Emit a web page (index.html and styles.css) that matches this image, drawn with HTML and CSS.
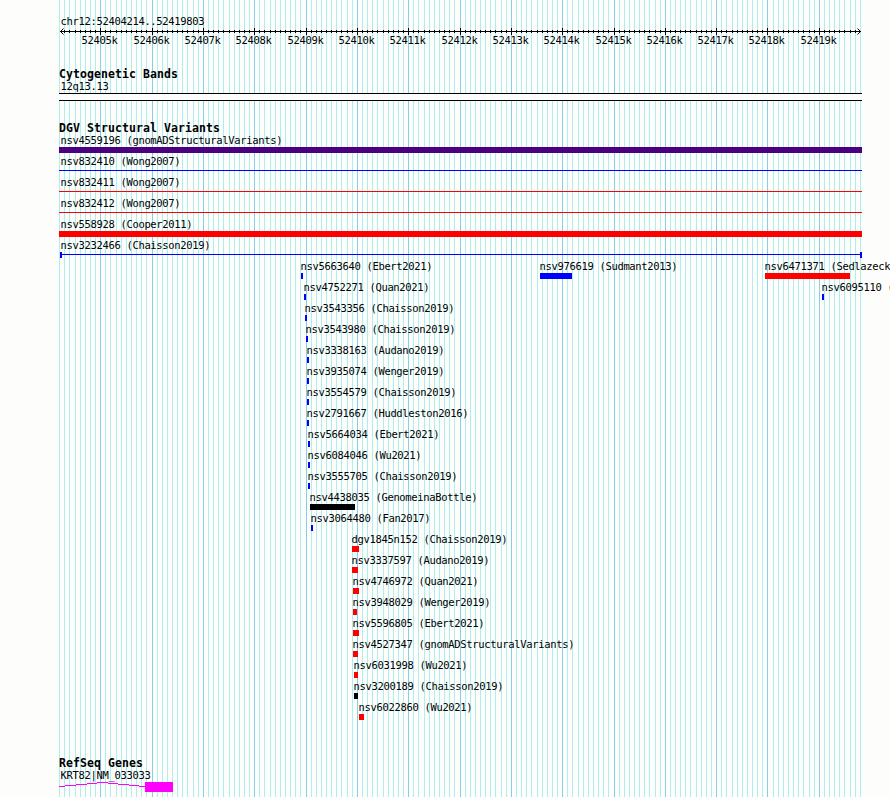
FILE: index.html
```
<!DOCTYPE html>
<html lang="en">
<head>
    <meta charset="UTF-8">
    <title>chr12:52404214..52419803</title>
    <link rel="stylesheet" href="styles.css">
</head>
<body>
    <div class="browser">
        <svg class="grid" id="grid" width="890" height="797" shape-rendering="crispEdges"></svg>

        <section class="ruler">
            <div class="label">chr12:52404214..52419803</div>
            <svg id="ruler" width="890" height="22"></svg>
        </section>

        <section class="track cytoband">
            <h2>Cytogenetic Bands</h2>
            <div class="label">12q13.13</div>
            <div class="band"></div>
        </section>

        <section class="track variants">
            <h2>DGV Structural Variants</h2>
            <div id="variants"></div>
        </section>

        <section class="track genes">
            <h2>RefSeq Genes</h2>
            <div class="label">KRT82|NM_033033</div>
            <svg width="890" height="12" shape-rendering="crispEdges">
                <path d="M59 5.5H65M65 4.5H76M76 3.5H87M87 2.5H97M97 1.5H108M108 2.5H118M118 3.5H129M129 4.5H139M139 5.5H145" stroke="#f0f"/>
                <rect x="145" y="1" width="28" height="10" fill="#f0f"/>
            </svg>
        </section>
    </div>
    <script src="tracks.js"></script>
</body>
</html>
```
FILE: styles.css
```
body {
    margin: 0;
    background: #fdfefc;
    color: #000;
    overflow: hidden;
}
.browser {
    position: relative;
    width: 890px;
    height: 797px;
    overflow: hidden;
    font-family: "DejaVu Sans Mono", monospace;
}
.browser svg {
    display: block;
}
/* guide lines run behind every track */
.browser .grid {
    position: absolute;
    top: 0;
    left: 0;
    z-index: -1;
}
h2 {
    margin: 0;
    padding-left: 59px;
    height: 12px;
    font-size: 11.5px;
    line-height: 12px;
    letter-spacing: 0.077px;
}
.label {
    padding-left: 60.5px;
    height: 12px;
    font-size: 10.5px;
    line-height: 12px;
    letter-spacing: -0.33px;
    white-space: nowrap;
}
.ruler {
    padding-top: 15px;
    height: 53px;
}
.ruler text {
    font-size: 10.5px;
    letter-spacing: -0.32px;
}
.cytoband {
    height: 54px;
}
.band {
    width: 803px;
    height: 8px;
    margin: 1px 0 0 59px;
    box-sizing: border-box;
    border: solid #000;
    border-width: 1px 0;
    background: #fdfefc;
}
.variants {
    height: 635px;
}
.row {
    display: grid;
    height: 21px;
}
.feature {
    grid-area: 1 / 1;
}
.feature .label {
    height: 13px;
    padding-left: 0;
    margin-left: -0.5px;
}
.feature.wide .label {
    margin-left: 1.5px;
}
.bar {
    height: 6px;
}
.bar.line {
    height: 1px;
    margin-top: 2px;
}
.bar.range {
    margin: 0 0 0 1px;
    box-sizing: border-box;
    border: solid #00f;
    border-width: 0 2px;
    background: linear-gradient(#00f, #00f) 0 2px / 100% 1px no-repeat;
}
.blue { background: #00f; }
.red { background: #f00; }
.black { background: #000; }
.indigo { background: #4b0082; }
```
FILE: tracks.js
```
const FIRST = 100.67;   // x of 52405k
const STEP = 5.1333;    // 100 bp

function tickX(i) {
    return Math.floor(FIRST + (i - 8) * STEP);
}

// guide lines and ruler
let grid = '';
let ticks = '<path d="M60 4.5H861M63.5 1.5L60.5 4.5L63.5 7.5M857.5 1.5L860.5 4.5L857.5 7.5" fill="none" stroke="#000"/>';
for (let i = 0; i <= 156; i++) {
    const x = tickX(i);
    const major = i % 10 === 8;
    grid += `<rect x="${x}" y="0" width="1" height="797" fill="${major ? '#87ceeb' : '#afeeee'}"/>`;
    if (i > 0 && i < 156) {
        ticks += `<rect x="${x}" y="${major ? 1 : 3}" width="1" height="${major ? 7 : 3}"/>`;
    }
    if (major) {
        ticks += `<text x="${x - 18.5}" y="17">${52405 + (i - 8) / 10}k</text>`;
    }
}
document.getElementById('grid').innerHTML = grid;
document.getElementById('ruler').innerHTML = ticks;

// [name, x, width, class]
const rows = [
    [['nsv4559196 (gnomADStructuralVariants)', 59, 803, 'indigo']],
    [['nsv832410 (Wong2007)', 59, 803, 'blue line']],
    [['nsv832411 (Wong2007)', 59, 803, 'red line']],
    [['nsv832412 (Wong2007)', 59, 803, 'red line']],
    [['nsv558928 (Cooper2011)', 59, 803, 'red']],
    [['nsv3232466 (Chaisson2019)', 59, 802, 'range']],
    [
        ['nsv5663640 (Ebert2021)', 301, 2, 'blue'],
        ['nsv976619 (Sudmant2013)', 540, 32, 'blue'],
        ['nsv6471371 (Sedlazeck2020)', 765, 85, 'red']
    ],
    [
        ['nsv4752271 (Quan2021)', 304, 2, 'blue'],
        ['nsv6095110 (Wu2021)', 822, 2, 'blue']
    ],
    [['nsv3543356 (Chaisson2019)', 305, 2, 'blue']],
    [['nsv3543980 (Chaisson2019)', 306, 2, 'blue']],
    [['nsv3338163 (Audano2019)', 307, 2, 'blue']],
    [['nsv3935074 (Wenger2019)', 307, 2, 'blue']],
    [['nsv3554579 (Chaisson2019)', 307, 2, 'blue']],
    [['nsv2791667 (Huddleston2016)', 307, 2, 'blue']],
    [['nsv5664034 (Ebert2021)', 308, 2, 'blue']],
    [['nsv6084046 (Wu2021)', 308, 2, 'blue']],
    [['nsv3555705 (Chaisson2019)', 308, 2, 'blue']],
    [['nsv4438035 (GenomeinaBottle)', 310, 45, 'black']],
    [['nsv3064480 (Fan2017)', 311, 2, 'blue']],
    [['dgv1845n152 (Chaisson2019)', 352, 7, 'red']],
    [['nsv3337597 (Audano2019)', 352, 6, 'red']],
    [['nsv4746972 (Quan2021)', 353, 6, 'red']],
    [['nsv3948029 (Wenger2019)', 353, 4, 'red']],
    [['nsv5596805 (Ebert2021)', 353, 6, 'red']],
    [['nsv4527347 (gnomADStructuralVariants)', 353, 5, 'red']],
    [['nsv6031998 (Wu2021)', 354, 4, 'red']],
    [['nsv3200189 (Chaisson2019)', 354, 4, 'black']],
    [['nsv6022860 (Wu2021)', 359, 5, 'red']]
];

document.getElementById('variants').innerHTML = rows.map(row =>
    '<div class="row">' + row.map(([name, x, width, cls]) =>
        `<div class="feature${x === 59 ? ' wide' : ''}" style="margin-left:${x}px">
            <div class="label">${name}</div>
            <div class="bar ${cls}" style="width:${width}px"></div>
        </div>`).join('') + '</div>'
).join('');
```
